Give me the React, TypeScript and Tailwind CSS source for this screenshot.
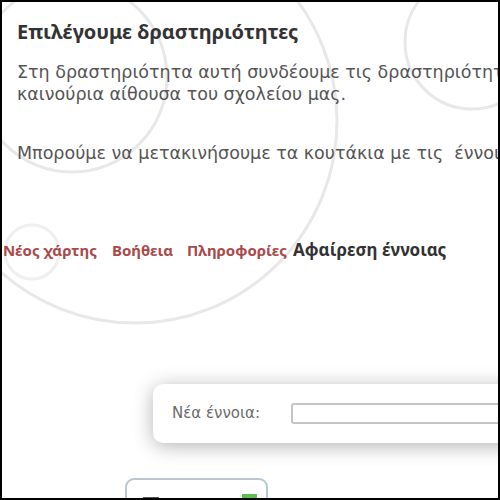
import React from 'react';

const menu = [
    { label: 'Νέος χάρτης', w: 'w-[109px]', tone: 'text-[#a8494a] text-[15px]' },
    { label: 'Βοήθεια', w: 'w-[75px]', tone: 'text-[#a8494a] text-[15px]' },
    { label: 'Πληροφορίες', w: 'w-[106px]', tone: 'text-[#a8494a] text-[15px]' },
    { label: 'Αφαίρεση έννοιας', w: 'w-[200px]', tone: 'text-[#333333] text-[17px]' },
];

// faint rings painted behind the page
function Rings() {
    return (
        <svg className="absolute inset-0 pointer-events-none blur-[0.6px]" width="500" height="500" viewBox="0 0 500 500" fill="none">
            <g stroke="#e8e8e8" strokeWidth="3">
                <circle cx="133" cy="119" r="202" />
                <circle cx="70" cy="75" r="95" />
                <circle cx="470" cy="40" r="67" />
                <circle cx="30" cy="250" r="27" stroke="#efefef" />
            </g>
        </svg>
    );
}

export default function App() {
    return (
        <div className="relative w-[500px] h-[500px] overflow-hidden border-2 border-black bg-white font-['Noto_Sans',sans-serif]">
            <Rings />
            <div className="relative flex flex-col">
                <h1 className="ml-[15px] mt-[16px] text-[20px] leading-[28px] font-bold text-[#333333] whitespace-nowrap">
                    Επιλέγουμε δραστηριότητες
                </h1>
                <p className="ml-[15px] mt-[15px] font-['DejaVu_Sans',sans-serif] text-[17.5px] leading-[22px] text-[#555555] whitespace-nowrap">
                    Στη δραστηριότητα αυτή συνδέουμε τις δραστηριότητες με την
                    <br />
                    καινούρια αίθουσα του σχολείου μας.
                </p>
                <p className="ml-[15px] mt-[37px] font-['DejaVu_Sans',sans-serif] text-[17.5px] leading-[22px] text-[#555555] whitespace-nowrap">
                    Μπορούμε να μετακινήσουμε τα κουτάκια με τις &nbsp;έννοιες
                </p>

                <nav className="ml-[1px] mt-[76px] flex items-baseline leading-[20px] font-bold whitespace-nowrap">
                    {menu.map(m => (
                        <a key={m.label} href="#" className={`${m.w} shrink-0 ${m.tone}`}>
                            {m.label}
                        </a>
                    ))}
                </nav>

                <div className="ml-[151px] mt-[124px] w-[400px] h-[59px] shrink-0 flex items-center rounded-[10px] bg-white shadow-[0_3px_20px_rgba(0,0,0,0.3)]">
                    <span className="ml-[19px] w-[119px] font-['DejaVu_Sans',sans-serif] text-[15px] text-[#6b6b6b]">Νέα έννοια:</span>
                    <input
                        type="text"
                        className="w-[260px] h-[21px] rounded-[3px] border-2 border-[#c4c4c4] bg-white"
                    />
                </div>

                <div className="ml-[123px] mt-[35px] w-[143px] h-[60px] shrink-0 rounded-[9px] border-2 border-[#bac6d2] bg-white flex items-start">
                    <span className="ml-[16px] mt-[17px] w-[16px] h-[3px] bg-[#555555]" />
                    <span className="ml-[83px] mt-[14px] w-[15px] h-[10px] bg-[#5fbf4a]" />
                </div>
            </div>
        </div>
    );
}
